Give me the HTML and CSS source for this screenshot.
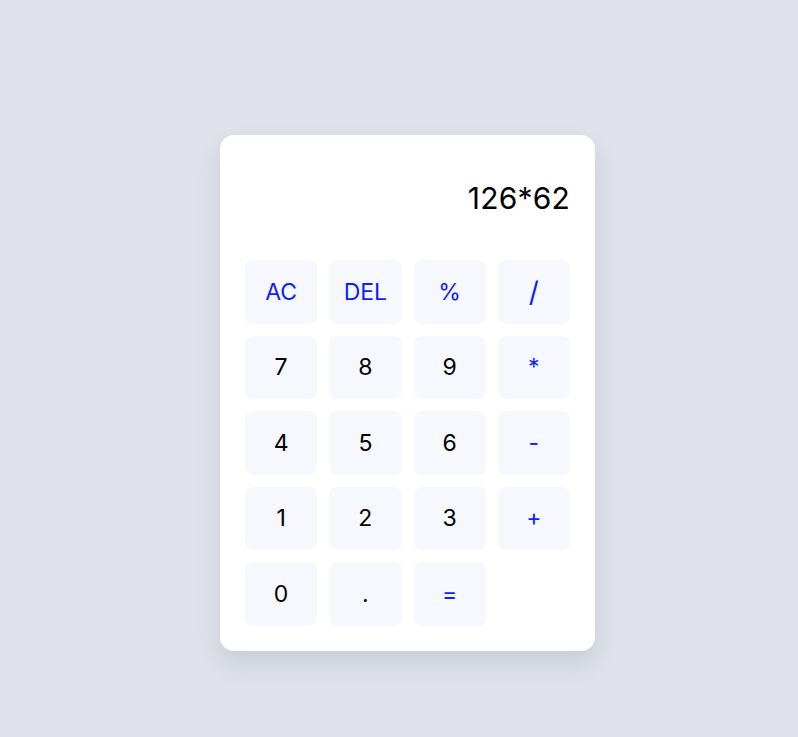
FILE: index.html
```html
<!DOCTYPE html>
<html>
<head>
<meta charset="utf-8">
<link rel="stylesheet" href="styles.css">
</head>
<body>
<div class="calc">
  <div class="display">126*62</div>
  <div class="keys">
    <button class="key op">AC</button>
    <button class="key op">DEL</button>
    <button class="key op">%</button>
    <button class="key op slash">/</button>
    <button class="key">7</button>
    <button class="key">8</button>
    <button class="key">9</button>
    <button class="key op">*</button>
    <button class="key">4</button>
    <button class="key">5</button>
    <button class="key">6</button>
    <button class="key op">-</button>
    <button class="key">1</button>
    <button class="key">2</button>
    <button class="key">3</button>
    <button class="key op">+</button>
    <button class="key">0</button>
    <button class="key">.</button>
    <button class="key op">=</button>
  </div>
</div>
</body>
</html>
```
FILE: styles.css
```css
html, body { margin: 0; padding: 0; }
body {
  background: #dfe2ea;
  height: 737px;
  font-family: "Inter", "Noto Sans", sans-serif;
}
.calc {
  position: relative;
  margin: 135px 0 0 220px;
  width: 375px;
  box-sizing: border-box;
  padding: 25px;
  background: #ffffff;
  border-radius: 14px;
  box-shadow: 0 12px 24px rgba(40, 50, 80, 0.12);
}
.display {
  height: 75px;
  margin-bottom: 25px;
  display: flex;
  align-items: center;
  justify-content: flex-end;
  font-size: 30px;
  color: #000;
  letter-spacing: 0.2px;
}
.keys {
  display: grid;
  grid-template-columns: repeat(4, 1fr);
  grid-auto-rows: 63.5px;
  gap: 12px;
}
.key {
  border: none;
  border-radius: 8px;
  background: #f7f8fe;
  font-family: inherit;
  font-size: 23px;
  color: #000;
  padding: 0;
}
.key.op { color: #0d1eff; }
.key.slash { font-size: 28px; }
```
